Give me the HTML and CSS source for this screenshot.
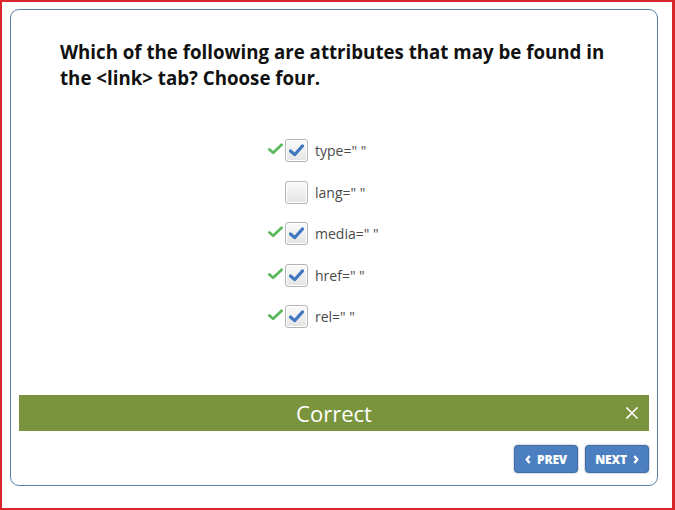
FILE: index.html
```html
<!DOCTYPE html>
<html>
<head>
<meta charset="utf-8">
<link rel="stylesheet" href="styles.css">
</head>
<body>
<div class="frame">
  <div class="card">
    <h1 class="question">Which of the following are attributes that may be found in the &lt;link&gt; tab? Choose four.</h1>
    <ul class="options">
      <li class="option">
        <span class="mark"><svg viewBox="0 0 16 12" width="15" height="12"><path d="M1.5 6.5 L5.5 10 L14.5 1.5" fill="none" stroke="#5cb85c" stroke-width="3" stroke-linecap="round" stroke-linejoin="round"/></svg></span>
        <span class="box checked"><svg viewBox="0 0 16 14" width="15" height="13"><path d="M1.5 7.5 L6 11.5 L14.5 2" fill="none" stroke="#3f78c0" stroke-width="3.4" stroke-linecap="round" stroke-linejoin="round"/></svg></span>
        <span class="label">type=" "</span>
      </li>
      <li class="option">
        <span class="mark"></span>
        <span class="box"></span>
        <span class="label">lang=" "</span>
      </li>
      <li class="option">
        <span class="mark"><svg viewBox="0 0 16 12" width="15" height="12"><path d="M1.5 6.5 L5.5 10 L14.5 1.5" fill="none" stroke="#5cb85c" stroke-width="3" stroke-linecap="round" stroke-linejoin="round"/></svg></span>
        <span class="box checked"><svg viewBox="0 0 16 14" width="15" height="13"><path d="M1.5 7.5 L6 11.5 L14.5 2" fill="none" stroke="#3f78c0" stroke-width="3.4" stroke-linecap="round" stroke-linejoin="round"/></svg></span>
        <span class="label">media=" "</span>
      </li>
      <li class="option">
        <span class="mark"><svg viewBox="0 0 16 12" width="15" height="12"><path d="M1.5 6.5 L5.5 10 L14.5 1.5" fill="none" stroke="#5cb85c" stroke-width="3" stroke-linecap="round" stroke-linejoin="round"/></svg></span>
        <span class="box checked"><svg viewBox="0 0 16 14" width="15" height="13"><path d="M1.5 7.5 L6 11.5 L14.5 2" fill="none" stroke="#3f78c0" stroke-width="3.4" stroke-linecap="round" stroke-linejoin="round"/></svg></span>
        <span class="label">href=" "</span>
      </li>
      <li class="option">
        <span class="mark"><svg viewBox="0 0 16 12" width="15" height="12"><path d="M1.5 6.5 L5.5 10 L14.5 1.5" fill="none" stroke="#5cb85c" stroke-width="3" stroke-linecap="round" stroke-linejoin="round"/></svg></span>
        <span class="box checked"><svg viewBox="0 0 16 14" width="15" height="13"><path d="M1.5 7.5 L6 11.5 L14.5 2" fill="none" stroke="#3f78c0" stroke-width="3.4" stroke-linecap="round" stroke-linejoin="round"/></svg></span>
        <span class="label">rel=" "</span>
      </li>
    </ul>
    <div class="feedback">
      <span class="feedback-text">Correct</span>
      <span class="close"><svg viewBox="0 0 12 12" width="12" height="12"><path d="M1 1 L11 11 M11 1 L1 11" stroke="#fff" stroke-width="1.6" stroke-linecap="square"/></svg></span>
    </div>
    <div class="nav">
      <button class="btn"><svg class="chev" viewBox="0 0 6 10" width="6" height="9"><path d="M4.8 1 L1.6 5 L4.8 9" fill="none" stroke="#fff" stroke-width="2.6"/></svg>PREV</button>
      <button class="btn">NEXT<svg class="chev" viewBox="0 0 6 10" width="6" height="9"><path d="M1.2 1 L4.4 5 L1.2 9" fill="none" stroke="#fff" stroke-width="2.6"/></svg></button>
    </div>
  </div>
</div>
</body>
</html>
```

FILE: styles.css
```css
* { box-sizing: border-box; }
html, body { margin: 0; padding: 0; background: #fff; }
body { font-family: "Open Sans", "Noto Sans", sans-serif; }

.frame {
  width: 675px;
  height: 510px;
  border: 2px solid #d9262a;
  border-right-width: 3px;
  padding: 7px 0 0 8px;
}

.card {
  width: 648px;
  height: 477px;
  border: 1px solid #5a7fa7;
  border-radius: 9px;
  padding-top: 29px;
  display: flex;
  flex-direction: column;
}

.question {
  margin: 0 0 0 49px;
  font-size: 18.7px;
  line-height: 26px;
  font-weight: 700;
  color: #111;
  width: 562px;
}

.options {
  list-style: none;
  margin: 39px 0 0 256px;
  padding: 0;
  display: flex;
  flex-direction: column;
}

.option {
  height: 41.5px;
  display: flex;
  align-items: center;
}

.mark {
  width: 18px;
  display: flex;
  align-items: center;
  justify-content: flex-start;
  margin-top: -3px;
  padding-left: 1px;
}

.box {
  width: 23px;
  height: 23px;
  border: 1px solid #b4b4b4;
  border-radius: 3px;
  background: linear-gradient(#fafafa, #e4e4e4);
  display: flex;
  align-items: center;
  justify-content: center;
  box-shadow: inset 0 0 0 1px #fff;
}

.label {
  margin-left: 7px;
  font-size: 14px;
  color: #4a4a4a;
}

.feedback {
  margin: auto 8px 0 8px;
  height: 36px;
  background: #7a943d;
  position: relative;
  display: flex;
  align-items: center;
  justify-content: center;
}

.feedback-text {
  color: #fff;
  font-size: 22px;
  font-weight: 400;
  margin-top: -1px;
}

.close {
  position: absolute;
  right: 11px;
  top: 12px;
  display: flex;
}

.nav {
  display: flex;
  justify-content: flex-end;
  gap: 7px;
  margin: 14px 8px 12px 0;
}

.btn {
  width: 64px;
  height: 28px;
  border: 1px solid #3f6da8;
  border-radius: 4px;
  background: #4b7fc0;
  box-shadow: 0 0 2px rgba(40, 70, 110, 0.6);
  color: #fff;
  font-family: "Open Sans", sans-serif;
  font-weight: 800;
  font-size: 12px;
  letter-spacing: -0.2px;
  display: flex;
  align-items: center;
  justify-content: center;
  gap: 6px;
  padding: 0;
}
```
